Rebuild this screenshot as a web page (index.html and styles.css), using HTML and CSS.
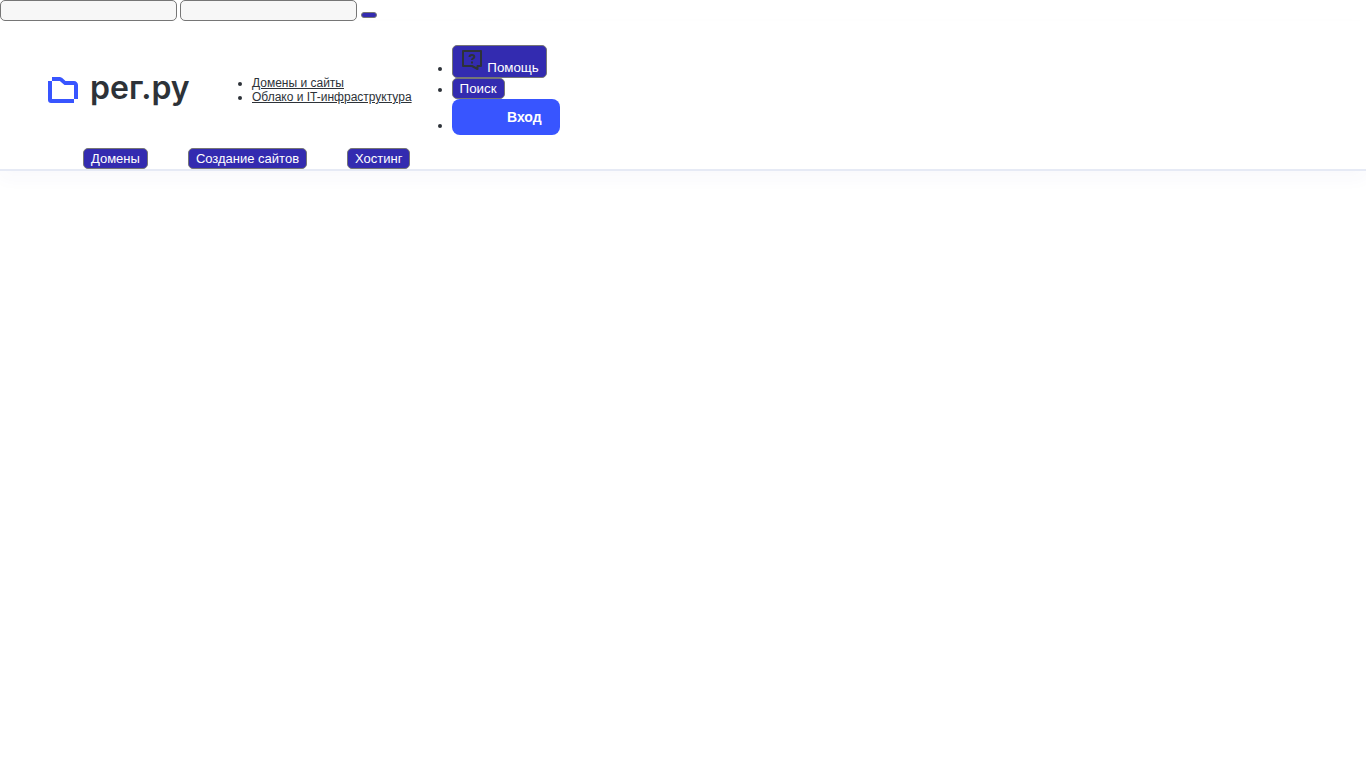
FILE: index.html
```
<!DOCTYPE html>
<html lang="ru">
<head>
    <meta charset="UTF-8">
    <meta name="viewport" content="width=device-width, initial-scale=1.0">
    <title>рег.ру</title>
    <link rel="stylesheet" href="styles.css">
</head>
<body>
    <form class="auth-form">
        <input type="text" name="login" aria-label="Логин">
        <input type="password" name="password" aria-label="Пароль">
        <button type="submit" class="btn btn-empty" aria-label="Отправить"></button>
    </form>

    <header class="header">
        <div class="header-main">
            <a href="#" class="logo">
                <svg class="logo-icon" width="30" height="26" viewBox="0 0 30 26">
                    <path fill="#3855ff" d="M4 0h7c1.500 0 2.800.500 3.800 1.500L17.500 4H26c2.200 0 4 1.700 4 4v14h-4V8H16.500l-4.700-4H4z"/>
                    <path fill="#3855ff" d="M0 4h4v18h22v4H3c-1.700 0-3-1.300-3-3z"/>
                </svg>
                <span class="logo-text">рег.ру</span>
            </a>
            <ul class="list">
                <li><a href="#">Домены и сайты</a></li>
                <li><a href="#">Облако и IT-инфраструктура</a></li>
            </ul>
            <ul class="list">
                <li>
                    <button type="button" class="btn">
                        <svg width="24" height="24" viewBox="0 0 24 24" fill="none" stroke="#2d3238" stroke-width="2">
                            <path d="M3 3h18v15h-3.500v3L12 18H3z" stroke-linejoin="round"/>
                            <path d="M9.500 9c0-1.300.900-2 2.400-2s2.400.700 2.400 1.900c0 1.400-2.400 1.500-2.400 3M12 13.500v2"/>
                        </svg>
                        Помощь
                    </button>
                </li>
                <li><button type="button" class="btn">Поиск</button></li>
                <li><button type="button" class="btn-login">Вход</button></li>
            </ul>
        </div>
        <nav class="header-nav">
            <button type="button" class="btn">Домены</button>
            <button type="button" class="btn">Создание сайтов</button>
            <button type="button" class="btn">Хостинг</button>
        </nav>
    </header>
</body>
</html>
```

FILE: styles.css
```
body {
    min-height: 100vh;
    margin: 0;
    font-family: "Liberation Sans", Arial, sans-serif;
    font-size: 12px;
    color: #2d3238;
    background: #fff;
}
input {
    box-sizing: border-box;
    width: 177px;
    height: 21px;
    border: 1px solid #767676;
    border-radius: 5px;
    background: #f7f7f7;
}
button {
    font-family: inherit;
    color: #fff;
    cursor: pointer;
}
.btn {
    padding: 2px 7px;
    border: 1px solid #767676;
    border-radius: 5px;
    background: #332bb0;
}
.btn-empty {
    height: 6px;
}
.header {
    border-bottom: 2px solid #e6eaf5;
    box-shadow: 0 8px 16px rgba(56, 56, 160, 0.03);
}
.header-main {
    display: flex;
    align-items: center;
    padding: 24px 48px 13px;
}
.logo {
    display: flex;
    align-items: center;
    gap: 12px;
    width: 140px;
    margin-right: 24px;
    color: #2d3238;
    text-decoration: none;
}
.logo-icon {
    flex-shrink: 0;
}
.logo-text {
    padding-bottom: 4px;
    font-family: Inter, sans-serif;
    font-size: 32px;
    font-weight: 600;
    line-height: 32px;
}
.list {
    margin: 0;
    padding-left: 40px;
}
.list a {
    color: inherit;
}
.btn-login {
    min-width: 108px;
    height: 36px;
    padding: 0 18px;
    border: none;
    border-radius: 8px;
    background: #3855ff;
    font-size: 14px;
    font-weight: bold;
    text-align: right;
    vertical-align: 7px;
}
.header-nav {
    display: flex;
    gap: 40px;
    padding-left: 83px;
}
.header-nav .btn {
    height: 21px;
    font-size: 13px;
}
```
